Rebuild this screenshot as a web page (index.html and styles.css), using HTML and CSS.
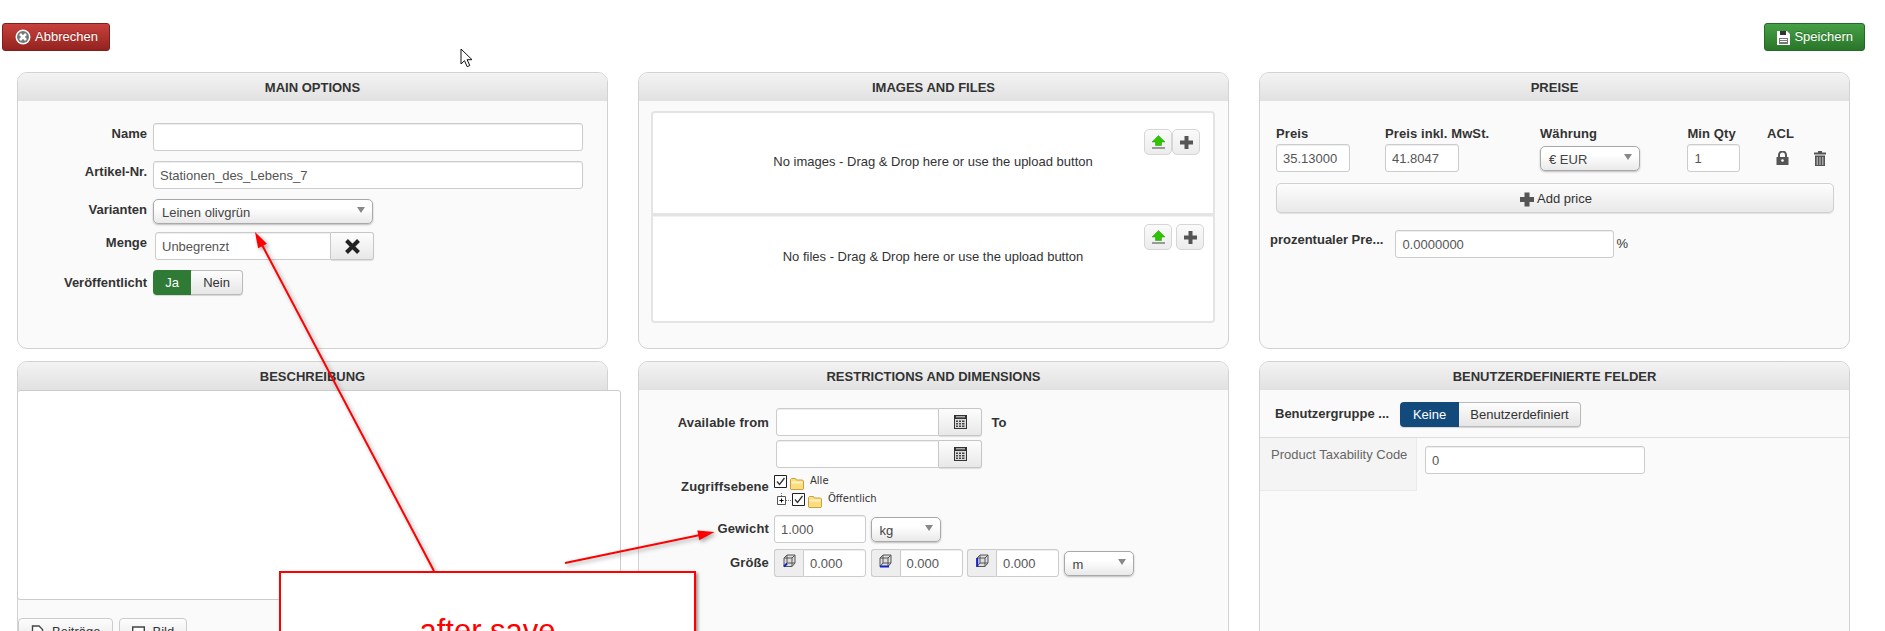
FILE: index.html
```html
<!DOCTYPE html>
<html lang="de">
<head>
<meta charset="utf-8">
<title>Artikel bearbeiten</title>
<link rel="stylesheet" href="styles.css">
</head>
<body>
<div class="toolbar">
  <button class="btn btn-danger"><svg class="ico16" viewBox="0 0 16 16"><circle cx="8" cy="8" r="7.5" fill="#fff"/><circle cx="8" cy="8" r="6" fill="#777"/><path d="M5 5l6 6M11 5l-6 6" stroke="#fff" stroke-width="2.6"/></svg>Abbrechen</button>
  <button class="btn btn-success"><svg class="ico13" viewBox="0 0 13 15"><path d="M0 1h10l3 3v11H0z" fill="#fff"/><path d="M3 1h6v4H3z" fill="#333"/><path d="M2 8h9v6H2z" fill="#777"/><path d="M3 9h7v1H3zM3 11h7v1H3z" fill="#fff"/></svg>Speichern</button>
</div>

<main class="grid">
  <section class="panel">
    <h2 class="panel-title">Main Options</h2>
    <div class="panel-body body-main">
      <div class="row row-10"><label class="lab lab-main">Name</label><input class="input w-430" type="text"></div>
      <div class="row row-10"><label class="lab lab-main">Artikel-Nr.</label><input class="input w-430" type="text" value="Stationen_des_Lebens_7"></div>
      <div class="row row-8"><label class="lab lab-main">Varianten</label><div class="select w-220"><span>Leinen olivgrün</span><i class="caret"></i></div></div>
      <div class="row row-10"><label class="lab lab-main">Menge</label>
        <div class="group group-menge"><input class="input input-left w-176" type="text" value="Unbegrenzt"><span class="addon-btn w-43"><svg class="ico15" viewBox="0 0 15 15"><path d="M1.500 1.500l12 12M13.500 1.500l-12 12" stroke="#222" stroke-width="4"/></svg></span></div>
      </div>
      <div class="row"><label class="lab lab-main lab-toggle">Veröffentlicht</label>
        <div class="toggle"><span class="tg tg-green w-38">Ja</span><span class="tg w-52">Nein</span></div>
      </div>
    </div>
  </section>

  <section class="panel">
    <h2 class="panel-title">Images and Files</h2>
    <div class="panel-body body-files">
      <div class="dropbox">
        <div class="drop drop-first">
          <p class="drop-text text-first">No images - Drag &amp; Drop here or use the upload button</p>
          <div class="drop-tools tools-tight">
            <span class="tool"><svg class="ico15" viewBox="0 0 15 15"><path d="M7.5 0.5L14 7H10.5V10.5H4.5V7H1z" fill="#2fc400" stroke="#1f9a00" stroke-width=".5"/><path d="M1 12h13v2H1z" fill="#999"/></svg></span>
            <span class="tool"><svg class="ico15" viewBox="0 0 15 15"><path d="M5.5 1h4v4.500h4.500v4H9.500v4.500h-4V9.500H1v-4h4.500z" fill="#555"/></svg></span>
          </div>
        </div>
        <div class="drop">
          <p class="drop-text text-second">No files - Drag &amp; Drop here or use the upload button</p>
          <div class="drop-tools tools-wide">
            <span class="tool"><svg class="ico15" viewBox="0 0 15 15"><path d="M7.5 0.5L14 7H10.5V10.5H4.5V7H1z" fill="#2fc400" stroke="#1f9a00" stroke-width=".5"/><path d="M1 12h13v2H1z" fill="#999"/></svg></span>
            <span class="tool"><svg class="ico15" viewBox="0 0 15 15"><path d="M5.5 1h4v4.500h4.500v4H9.500v4.500h-4V9.500H1v-4h4.500z" fill="#555"/></svg></span>
          </div>
        </div>
      </div>
    </div>
  </section>

  <section class="panel">
    <h2 class="panel-title">Preise</h2>
    <div class="panel-body body-prices">
      <div class="price-row">
        <div class="pc pc-1"><div class="pc-lab">Preis</div><input class="input w-74" type="text" value="35.13000"></div>
        <div class="pc pc-2"><div class="pc-lab">Preis inkl. MwSt.</div><input class="input w-74" type="text" value="41.8047"></div>
        <div class="pc pc-3"><div class="pc-lab">Währung</div><div class="select w-100 select-price"><span>€ EUR</span><i class="caret"></i></div></div>
        <div class="pc pc-4"><div class="pc-lab">Min Qty</div><input class="input w-53" type="text" value="1"></div>
        <div class="pc"><div class="pc-lab">ACL</div>
          <div class="acl-icons">
            <svg class="ico-lock" viewBox="0 0 13 14"><path d="M3 6V4a3.500 3.500 0 0 1 7 0v2" fill="none" stroke="#555" stroke-width="2"/><path d="M0.500 6h12v8h-12z" fill="#555"/><circle cx="6.500" cy="9.500" r="1.300" fill="#fff"/></svg>
            <svg class="ico-trash" viewBox="0 0 12 15"><path d="M4 0h4v1.500h4v2H0v-2h4z" fill="#555"/><path d="M1 4.500h10V15H1z" fill="#555"/><path d="M3.200 6v8M6 6v8M8.800 6v8" stroke="#ddd" stroke-width=".9"/></svg>
          </div>
        </div>
      </div>
      <button class="add-price"><svg class="ico14" viewBox="0 0 14 15"><path d="M4.500 0.500h5v4.500H14v5H9.500v4.500h-5V10H0V5h4.500z" fill="#555"/></svg>Add price</button>
      <div class="percent-row"><span class="pc-lab percent-lab">prozentualer Pre...</span><input class="input w-219" type="text" value="0.0000000"><span class="percent-sign">%</span></div>
    </div>
  </section>

  <section class="panel">
    <h2 class="panel-title">Beschreibung</h2>
    <div class="editor"></div>
    <div class="editor-buttons">
      <button class="ed-btn ed-1"><svg class="ico13" viewBox="0 0 13 15"><path d="M1.500 1h6.500l3.500 3.500V14h-10z" fill="#fff" stroke="#444" stroke-width="1.400"/></svg>Beiträge</button>
      <button class="ed-btn ed-2"><svg class="ico13" viewBox="0 0 13 15"><path d="M0.700 2h11.600v11H0.700z" fill="#fff" stroke="#444" stroke-width="1.400"/><path d="M2 12l3-4 2 2 2-3 2 5z" fill="#444"/></svg>Bild</button>
    </div>
  </section>

  <section class="panel">
    <h2 class="panel-title">Restrictions and Dimensions</h2>
    <div class="panel-body body-restr">
      <div class="row row-4"><label class="lab lab-res lab-pad-5">Available from</label>
        <div class="group group-date"><input class="input input-left w-163" type="text"><span class="addon-btn w-43"><svg class="ico-cal" viewBox="0 0 13 14"><use href="#cal"/></svg></span></div>
        <span class="to-label">To</span>
      </div>
      <div class="row row-7"><label class="lab lab-res"></label>
        <div class="group group-date"><input class="input input-left w-163" type="text"><span class="addon-btn w-43"><svg class="ico-cal" viewBox="0 0 13 14"><use href="#cal"/></svg></span></div>
      </div>
      <div class="row row-9"><label class="lab lab-res lab-tree">Zugriffsebene</label>
        <div class="tree">
          <div class="tree-row"><svg class="ico-check" viewBox="0 0 13 13"><use href="#chk"/></svg><svg class="ico-folder" viewBox="0 0 14 13"><use href="#folder"/></svg><span class="tree-text">Alle</span></div>
          <div class="tree-row tree-sub"><svg class="ico-expand" viewBox="0 0 15 13"><path d="M0.500 3.500h8v8h-8z" fill="#fff" stroke="#555"/><path d="M2.500 7.500h4M4.500 5.500v4" stroke="#000"/><path d="M4.500 0v3M9 7.500h6" stroke="#777" stroke-dasharray="1 1"/></svg><svg class="ico-check" viewBox="0 0 13 13"><use href="#chk"/></svg><svg class="ico-folder" viewBox="0 0 14 13"><use href="#folder"/></svg><span class="tree-text">Öffentlich</span></div>
        </div>
      </div>
      <div class="row row-6"><label class="lab lab-res lab-pad">Gewicht</label>
        <input class="input w-92" type="text" value="1.000">
        <div class="select w-70 select-unit"><span>kg</span><i class="caret"></i></div>
      </div>
      <div class="row"><label class="lab lab-res lab-pad">Größe</label>
        <div class="group size-group w-92"><span class="addon"><svg class="ico-cube" viewBox="0 0 13 14"><use href="#cube"/><path d="M1 12.500l3-3" stroke="#1122cc" stroke-width="2"/></svg></span><input class="input input-right" type="text" value="0.000"></div>
        <div class="group size-group gap-l w-92"><span class="addon"><svg class="ico-cube" viewBox="0 0 13 14"><use href="#cube"/><path d="M1 12.500h9" stroke="#1122cc" stroke-width="2"/></svg></span><input class="input input-right" type="text" value="0.000"></div>
        <div class="group size-group gap-l w-92"><span class="addon"><svg class="ico-cube" viewBox="0 0 13 14"><use href="#cube"/><path d="M1.200 4v9" stroke="#1122cc" stroke-width="2"/></svg></span><input class="input input-right" type="text" value="0.000"></div>
        <div class="select w-70 select-unit"><span>m</span><i class="caret"></i></div>
      </div>
    </div>
  </section>

  <section class="panel">
    <h2 class="panel-title">Benutzerdefinierte Felder</h2>
    <div class="custom-head"><span class="pc-lab custom-lab">Benutzergruppe ...</span>
      <div class="toggle"><span class="tg tg-blue w-59">Keine</span><span class="tg w-122">Benutzerdefiniert</span></div>
    </div>
    <div class="custom-row"><div class="custom-name">Product Taxability Code</div><input class="input w-220 custom-input" type="text" value="0"></div>
  </section>
</main>

<svg class="defs" aria-hidden="true">
  <symbol id="cal" viewBox="0 0 13 14"><path d="M0 0h13v14H0z" fill="#333"/><path d="M1 4h11v9H1z" fill="#ddd"/><path d="M2 5.500h2v1.500H2zM5 5.500h2v1.500H5zM8 5.500h2.500v1.500H8zM2 8h2v1.500H2zM5 8h2v1.500H5zM8 8h2.500v1.500H8zM2 10.500h2V12H2zM5 10.500h2V12H5zM8 10.500h2.500V12H8z" fill="#444"/><path d="M2 1h9v1.500H2z" fill="#aaa"/></symbol>
  <symbol id="chk" viewBox="0 0 13 13"><path d="M0.500 0.500h12v12H0.500z" fill="#fff" stroke="#222"/><path d="M3 6.500l2.500 3L10.500 3" fill="none" stroke="#333" stroke-width="1.300"/></symbol>
  <symbol id="folder" viewBox="0 0 14 13"><path d="M0.500 12V2.500l1-1h4l1 1.500h6l1 1V12l-.5.500H1z" fill="#fcdc80" stroke="#c9a23c"/><path d="M1.500 4.500h11v2h-11z" fill="#fff2c0"/></symbol>
  <symbol id="cube" viewBox="0 0 13 14"><path d="M1 4l3-3h8v8l-3 3.500H1zM1 4h8v8.500M9 4l3-3M4 1v8h8M4 9l-3 3.500" fill="#aaa" fill-opacity=".25" stroke="#555" stroke-width="1"/></symbol>
</svg>

<div class="annotations">
  <svg class="arrows" viewBox="0 0 1885 631">
    <path d="M434 571L260 241" class="arrow-line"/>
    <path d="M255 232L266.900 243.700 258.100 248.300z" class="arrow-head"/>
    <path d="M565 563L700 535" class="arrow-line"/>
    <path d="M714.500 532L699.300 540.200 697.300 530.400z" class="arrow-head"/>
  </svg>
  <div class="note">after save</div>
  <svg class="cursor" viewBox="0 0 13 20"><path d="M1 1v15l3.500-3.300 2.700 6 2.600-1.200-2.700-5.800H12z" fill="#fff" stroke="#111" stroke-width="1"/></svg>
</div>
</body>
</html>
```
FILE: styles.css
```css
* { box-sizing: border-box; }
html, body { margin: 0; height: 631px; overflow: hidden; background: #fff; }
body { position: relative; font: 13px/20px "Liberation Sans", Arial, sans-serif; color: #333; }

.toolbar { display: flex; justify-content: space-between; padding: 23px 20px 0 2px; height: 51px; margin-bottom: 21px; }
.btn { display: inline-flex; align-items: center; height: 28px; padding: 0 11px 0 12px; border-radius: 3px; color: #fff; font: inherit; text-shadow: 0 -1px 0 rgba(0,0,0,.25); }
.btn-danger { background: linear-gradient(#c8413c, #93231f); border: 1px solid #7f1f1b; }
.btn-success { background: linear-gradient(#45a045, #2a762a); border: 1px solid #24692a; }
.ico16 { width: 16px; height: 16px; margin-right: 4px; }
.ico13 { width: 13px; height: 15px; margin-right: 4px; }
.ico14 { width: 14px; height: 15px; margin-right: 3px; }
.ico15 { width: 15px; height: 15px; display: block; }

.grid { display: grid; grid-template-columns: repeat(3, 591px); grid-template-rows: 277px 400px; column-gap: 30px; row-gap: 12px; padding-left: 17px; }
.panel { background: #fafafa; border: 1px solid #d2d2d2; border-radius: 10px; }
.panel-title { margin: 0; height: 28px; border-radius: 9px 9px 0 0; background: linear-gradient(#f3f3f3, #e1e1e1); font: bold 13px/30px "Liberation Sans", Arial, sans-serif; text-align: center; text-transform: uppercase; color: #333; }

.row { display: flex; align-items: flex-start; }
.row-4 { margin-bottom: 4px; }
.row-6 { margin-bottom: 6px; }
.row-7 { margin-bottom: 7px; }
.row-8 { margin-bottom: 8px; }
.row-9 { margin-bottom: 9px; }
.row-10 { margin-bottom: 10px; }
.lab { flex: none; font-weight: bold; text-align: right; white-space: nowrap; }
.lab-main { width: 129px; margin-right: 6px; padding-top: 1px; }
.lab-toggle { padding-top: 3px; }
.lab-res { width: 130px; margin-right: 5px; letter-spacing: .15px; }
.lab-pad { padding-top: 4px; }
.lab-pad-5 { padding-top: 5px; }
.lab-tree { padding-top: 2px; }

.input { height: 28px; padding: 4px 6px; border: 1px solid #ccc; border-radius: 3px; background: #fff; box-shadow: inset 0 1px 1px rgba(0,0,0,.075); font: 13px/18px "Liberation Sans", Arial, sans-serif; color: #555; outline: none; flex: none; }
.input-left { border-radius: 3px 0 0 3px; }
.input-right { border-radius: 0 3px 3px 0; border-left: 1px solid #ccc; flex: 1 1 0; min-width: 0; padding-left: 6px; }
.w-430 { width: 430px; }
.w-220 { width: 220px; }
.w-219 { width: 219px; }
.w-176 { width: 176px; }
.w-163 { width: 163px; }
.w-122 { width: 122px; }
.w-100 { width: 100px; }
.w-92 { width: 92px; }
.w-74 { width: 74px; }
.w-70 { width: 70px; }
.w-59 { width: 59px; }
.w-53 { width: 53px; }
.w-52 { width: 52px; }
.w-43 { width: 43px; }
.w-38 { width: 38px; }

.select { flex: none; display: flex; align-items: center; justify-content: space-between; height: 25px; padding: 3px 7px 0 8px; border: 1px solid #a9a9a9; border-radius: 5px; background: linear-gradient(#fff 35%, #e9e9e9); box-shadow: 0 1px 2px rgba(0,0,0,.25); color: #444; }
.caret { width: 0; height: 0; border: 4px solid transparent; border-top: 6px solid #888; border-bottom: 0; margin-top: -7px; }
.select-price { margin-top: 2px; }
.select-unit { margin: 2px 0 0 4.500px; padding-left: 8px; }

.group { display: flex; flex: none; }
.group-menge { margin-left: 2px; }
.group-date { margin-left: 2px; }
.addon-btn { flex: none; display: flex; align-items: center; justify-content: center; height: 28px; border: 1px solid #c6c6c6; border-left: 0; border-radius: 0 3px 3px 0; background: linear-gradient(#fdfdfd, #e8e8e8); box-shadow: 0 1px 1px rgba(0,0,0,.12); }
.to-label { margin-left: 9.500px; padding-top: 5px; font-weight: bold; }
.addon { flex: none; width: 29px; height: 28px; display: flex; justify-content: center; padding-top: 4px; background: #eee; border: 1px solid #ccc; border-right: 0; border-radius: 3px 0 0 3px; }
.gap-l { margin-left: 4.500px; }
.ico-cube { width: 13px; height: 14px; }
.ico-cal { width: 13px; height: 14px; }

.toggle { display: flex; height: 25px; box-shadow: 0 1px 1px rgba(0,0,0,.15); border-radius: 4px; }
.tg { display: flex; align-items: center; justify-content: center; border: 1px solid #bbb; border-left: 0; border-radius: 0 4px 4px 0; background: linear-gradient(#fdfdfd, #e6e6e6); }
.tg-green, .tg-blue { color: #fff; border: 0; border-radius: 4px 0 0 4px; }
.tg-green { background: #2f7a35; }
.tg-blue { background: #134a7c; }

.body-main { padding-top: 22px; }
.body-files { padding: 10px 13px 0 12px; }
.dropbox { height: 212px; border: 2px solid #e4e4e4; border-radius: 4px; background: #fff; }
.drop { display: grid; height: 104px; }
.drop-first { height: 100px; margin-bottom: 4px; box-shadow: 0 3.500px 0 #e4e4e4; }
.drop-text { grid-area: 1 / 1; text-align: center; height: 20px; }
.text-first { margin: 39px 0 0; }
.text-second { margin: 30px 0 0; }
.drop-tools { grid-area: 1 / 1; justify-self: end; display: flex; height: 26px; }
.tools-tight { margin: 16px 13px 0 0; }
.tools-wide { margin: 7px 9px 0 0; gap: 4px; }
.tool { width: 28px; height: 26px; display: flex; align-items: center; justify-content: center; border: 1px solid #d6d6d6; border-radius: 5px; background: linear-gradient(#fafafa, #ececec); }

.body-prices { padding-top: 22px; }
.price-row { display: flex; padding-left: 16px; }
.pc { flex: none; }
.pc-1 { width: 109px; }
.pc-2 { width: 155px; }
.pc-3 { width: 147.400px; }
.pc-4 { width: 79.600px; }
.pc-lab { font-weight: bold; white-space: nowrap; }
.pc .pc-lab { padding-top: 1px; letter-spacing: .1px; }
.acl-icons { display: flex; align-items: flex-start; padding: 7px 0 0 9px; }
.ico-lock { width: 13px; height: 14px; }
.ico-trash { width: 12px; height: 15px; margin-left: 25px; }
.add-price { display: flex; align-items: center; justify-content: center; width: 558px; height: 30px; margin: 11px 0 0 15.500px; padding: 2px 0 0 3px; border: 1px solid #d0d0d0; border-radius: 5px; background: linear-gradient(#fdfdfd, #e9e9e9); box-shadow: 0 1px 1px rgba(0,0,0,.1); font: inherit; color: #333; }
.percent-row { display: flex; align-items: flex-start; margin: 17px 0 0 10px; }
.percent-lab { width: 125.400px; }
.percent-sign { margin: 4px 0 0 2px; }

.editor { width: 604px; height: 210px; margin-left: -1px; background: #fff; border: 1px solid #ccc; border-radius: 3px; position: relative; }
.editor-buttons { display: flex; gap: 6px; margin-top: 18px; }
.ed-btn { display: flex; align-items: center; height: 28px; padding: 0 0 0 12px; border: 1px solid #ccc; border-radius: 4px; background: linear-gradient(#fdfdfd, #e6e6e6); font: inherit; color: #333; }
.ed-btn .ico13 { margin-right: 8px; }
.ed-1 { width: 94.500px; }
.ed-2 { width: 68.500px; }

.body-restr { padding-top: 18px; }
.tree { font: 10px/14px "DejaVu Sans", Verdana, sans-serif; height: 31px; }
.tree-row { display: flex; align-items: flex-start; height: 18px; }
.tree-sub { margin-left: 3px; }
.ico-check { width: 13px; height: 13px; flex: none; }
.ico-folder { width: 14px; height: 13px; margin: 2px 0 0 3px; flex: none; }
.ico-expand { width: 15px; height: 13px; flex: none; }
.tree-text { margin-left: 6px; margin-top: -1px; color: #333; }
.size-group { flex: none; }
.size-group + .select { margin-left: 4.500px; }

.custom-head { display: flex; align-items: flex-start; height: 48px; padding: 12px 0 0 15px; border-bottom: 1px solid #ddd; }
.custom-lab { width: 125px; line-height: 24px; }
.custom-row { display: flex; align-items: flex-start; }
.custom-name { width: 157px; height: 53px; padding: 7px 0 0 11px; background: #f4f4f4; border-right: 1px solid #eaeaea; border-bottom: 1px solid #eaeaea; color: #666; white-space: nowrap; }
.custom-input { margin: 8px 0 0 8px; }

.defs { position: absolute; width: 0; height: 0; }
.annotations { position: absolute; left: 0; top: 0; width: 1885px; height: 631px; pointer-events: none; }
.arrows { position: absolute; left: 0; top: 0; width: 1885px; height: 631px; filter: drop-shadow(2px 2px 2px rgba(0,0,0,.35)); }
.arrow-line { stroke: #f00; stroke-width: 2; fill: none; }
.arrow-head { fill: #f00; }
.note { position: absolute; left: 279px; top: 571px; width: 417px; height: 100px; padding-top: 41px; border: 2px solid #f00; background: #fff; box-shadow: 2px 2px 3px rgba(0,0,0,.4); color: #f00; font-size: 31px; line-height: 34px; text-align: center; }
.cursor { position: absolute; left: 460px; top: 48px; width: 13px; height: 20px; }
```
